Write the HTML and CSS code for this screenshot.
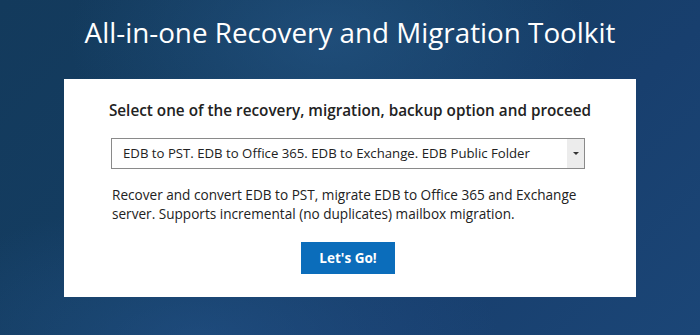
FILE: index.html
```html
<!DOCTYPE html>
<html lang="en">
<head>
<meta charset="utf-8">
<title>All-in-one Recovery and Migration Toolkit</title>
<link rel="stylesheet" href="styles.css">
</head>
<body>
<main class="page">
  <h1 class="title">All-in-one Recovery and Migration Toolkit</h1>
  <section class="card">
    <h2 class="subtitle">Select one of the recovery, migration, backup option and proceed</h2>
    <div class="select">
      <span class="select-text">EDB to PST. EDB to Office 365. EDB to Exchange. EDB Public Folder</span>
      <span class="select-arrow"><span class="caret"></span></span>
    </div>
    <p class="desc">Recover and convert EDB to PST, migrate EDB to Office 365 and Exchange server. Supports incremental (no duplicates) mailbox migration.</p>
    <div class="actions"><button class="btn" type="button">Let's Go!</button></div>
  </section>
</main>
</body>
</html>
```
FILE: styles.css
```css
html, body {
  margin: 0;
  padding: 0;
}
body {
  width: 700px;
  height: 335px;
  overflow: hidden;
  font-family: "Open Sans", "Noto Sans", sans-serif;
  background:
    radial-gradient(ellipse 260px 160px at 330px 40px, rgba(40, 90, 140, 0.55), rgba(40, 90, 140, 0) 100%),
    radial-gradient(ellipse 300px 140px at 200px 340px, rgba(40, 90, 150, 0.45), rgba(40, 90, 150, 0) 100%),
    linear-gradient(135deg, #133a5c 0%, #143d62 40%, #183f6e 70%, #1b4677 100%);
}
.page {
  display: flex;
  flex-direction: column;
  align-items: center;
}
.title {
  margin: 12px 0 0;
  height: 67px;
  font-size: 27.8px;
  font-weight: 500;
  color: #ffffff;
  line-height: 40px;
  letter-spacing: 0;
  white-space: nowrap;
}
.card {
  box-sizing: border-box;
  width: 572px;
  height: 218px;
  background: #ffffff;
  display: flex;
  flex-direction: column;
  align-items: center;
  padding-top: 19px;
}
.subtitle {
  margin: 0;
  font-size: 15.3px;
  font-weight: 600;
  color: #222222;
  line-height: 24px;
  white-space: nowrap;
}
.select {
  box-sizing: border-box;
  align-self: flex-start;
  margin: 16px 0 0 47px;
  width: 474px;
  height: 31px;
  border: 1px solid #8a8a8a;
  display: flex;
  align-items: stretch;
  background: #fff;
}
.select-text {
  flex: 1;
  padding-left: 11px;
  font-size: 13.2px;
  line-height: 29px;
  color: #222;
  white-space: nowrap;
  overflow: hidden;
}
.select-arrow {
  width: 17px;
  background: #ececec;
  display: flex;
  align-items: center;
  justify-content: center;
}
.caret {
  width: 0;
  height: 0;
  border-left: 3px solid transparent;
  border-right: 3px solid transparent;
  border-top: 3px solid #333;
}
.desc {
  box-sizing: border-box;
  align-self: flex-start;
  margin: 16px 0 0 48px;
  width: 474px;
  font-size: 13.6px;
  line-height: 19px;
  color: #222;
}
.actions {
  margin-top: 19px;
  display: flex;
  justify-content: center;
  width: 100%;
  padding-right: 4px;
  box-sizing: border-box;
}
.btn {
  width: 94px;
  height: 32px;
  border: 0;
  background: #0b6dbb;
  color: #fff;
  font-family: "Open Sans", "Noto Sans", sans-serif;
  font-weight: 700;
  font-size: 13.5px;
  padding: 0;
}
```
